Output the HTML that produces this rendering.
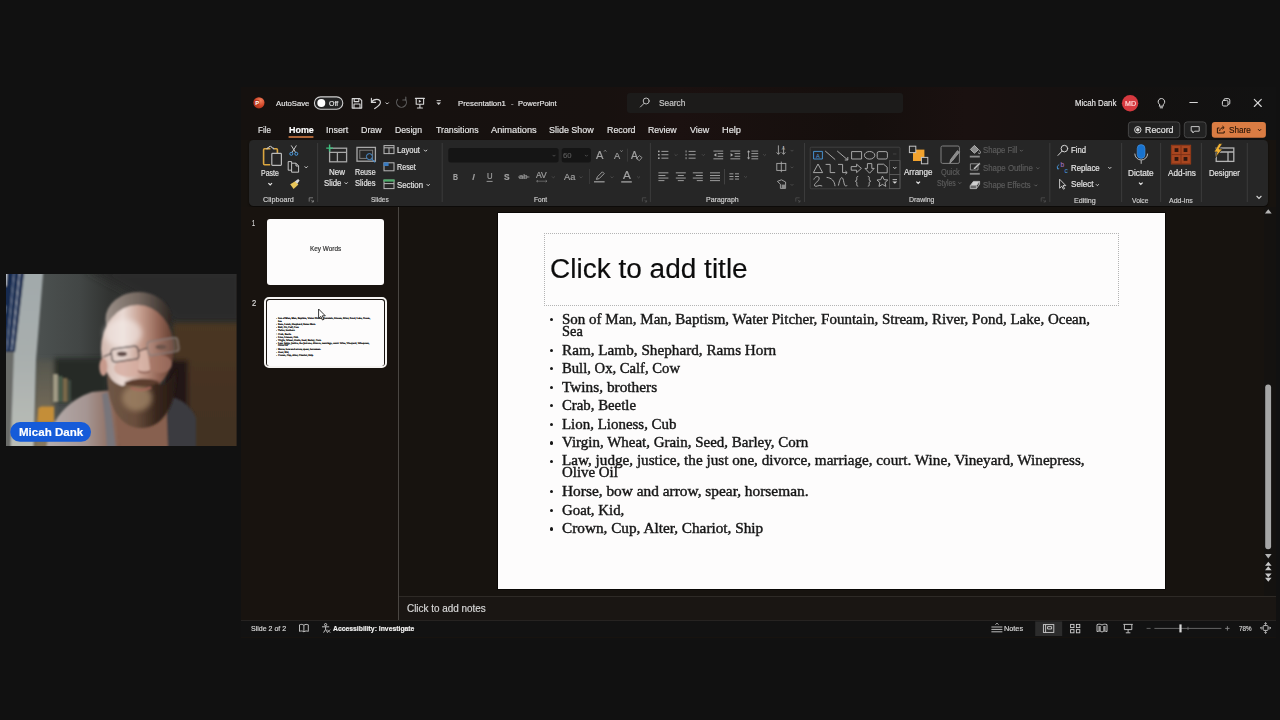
<!DOCTYPE html>
<html lang="en"><head><meta charset="utf-8"><title>Presentation1 - PowerPoint</title>
<style>
html,body{margin:0;padding:0;width:1280px;height:720px;overflow:hidden;background:#111111}
body{position:relative;font-family:"Liberation Sans",sans-serif}
.t{position:absolute;white-space:pre;line-height:1;transform-origin:0 0;font-family:"Liberation Sans",sans-serif;-webkit-text-stroke:0.18px currentColor}
.sf{font-family:"Liberation Serif",serif}
.it{font-style:italic}
.sf{-webkit-text-stroke:0.4px #161616}
.mini{position:absolute;left:267.1px;top:299.5px}
.abs{position:absolute}
.cam{position:absolute;left:6px;top:274px}
.win{position:absolute;left:240.5px;top:86.5px;width:1035.5px;height:551px;background:#17130f}
.titlebar{position:absolute;left:240.5px;top:86.5px;width:1035.5px;height:53.5px;background:linear-gradient(90deg,#15110f 0%,#17110f 35%,#1b1110 42%,#150f0d 60%,#1a1110 70%,#131110 85%,#121212 100%)}
.search{position:absolute;left:627px;top:93px;width:275.5px;height:20px;background:#1c1b1a;border-radius:3px}
.ribbon{position:absolute;left:249px;top:140px;width:1019.4px;height:65.6px;background:#262626;border-radius:4.5px;box-shadow:0 1px 2px rgba(0,0,0,.6)}
.thumbs{position:absolute;left:240.5px;top:207px;width:158px;height:414px;background:#18130f}
.vdiv{position:absolute;left:398.3px;top:207px;width:1px;height:414px;background:#4a4642}
.editor{position:absolute;left:399.3px;top:207px;width:864.7px;height:390px;background:#17130f}
.vscroll{position:absolute;left:1264px;top:207px;width:12px;height:390px;background:#141210}
.notes{position:absolute;left:399.3px;top:596.4px;width:876.7px;height:24.6px;background:#1a1613;border-top:1px solid #2e2a26;box-sizing:border-box}
.status{position:absolute;left:240.5px;top:620.2px;width:1035.5px;height:17.3px;background:#121212;border-top:0.8px solid #262321;box-sizing:border-box}
.slide{position:absolute;left:498.3px;top:213.1px;width:666.9px;height:375.6px;background:#fdfcfc;box-shadow:0 0 0 0.6px #000}
.ph{position:absolute;left:544.2px;top:233.2px;width:574.8px;height:72.5px;border:0.8px dotted #b4b4b4;box-sizing:border-box}
.bu{position:absolute;left:550.1px;width:3.3px;height:3.3px;border-radius:50%;background:#161616}
.th{position:absolute;background:#fdfcfc;border-radius:3px}
.ov{position:absolute;left:0;top:0;pointer-events:none}
</style></head><body>

<svg class="cam" width="231" height="172" viewBox="6 274 231 172">
<defs>
<filter id="b1" x="-20%" y="-20%" width="140%" height="140%"><feGaussianBlur stdDeviation="1.1"/></filter>
<filter id="b2" x="-20%" y="-20%" width="140%" height="140%"><feGaussianBlur stdDeviation="2.6"/></filter>
<filter id="b3" x="-30%" y="-30%" width="160%" height="160%"><feGaussianBlur stdDeviation="4.5"/></filter>
<linearGradient id="wall" x1="0" x2="1"><stop offset="0.15" stop-color="#4b504f"/><stop offset="0.32" stop-color="#424645"/><stop offset="0.45" stop-color="#313331"/><stop offset="1" stop-color="#2a2b28"/></linearGradient>
<linearGradient id="panel" x1="0" x2="0" y1="0" y2="1"><stop offset="0" stop-color="#a1a9ab"/><stop offset="0.5" stop-color="#a9afae"/><stop offset="1" stop-color="#bcbfb8"/></linearGradient>
<linearGradient id="door" x1="0" x2="0" y1="0" y2="1"><stop offset="0" stop-color="#4b3723"/><stop offset="0.6" stop-color="#443120"/><stop offset="1" stop-color="#423025"/></linearGradient>
<linearGradient id="skin" x1="0" x2="1"><stop offset="0" stop-color="#d2b8ae"/><stop offset="0.3" stop-color="#e9dad4"/><stop offset="0.55" stop-color="#c49c8d"/><stop offset="0.8" stop-color="#906252"/><stop offset="1" stop-color="#5c3a2e"/></linearGradient>
<linearGradient id="hair" x1="0" x2="1"><stop offset="0" stop-color="#9a8f88"/><stop offset="0.5" stop-color="#756860"/><stop offset="1" stop-color="#2e2622"/></linearGradient>
<linearGradient id="beard" x1="0" x2="1"><stop offset="0" stop-color="#6e5646"/><stop offset="0.4" stop-color="#6a4e3c"/><stop offset="0.7" stop-color="#3a281e"/><stop offset="1" stop-color="#241811"/></linearGradient>
<linearGradient id="shl" x1="0" x2="1"><stop offset="0" stop-color="#b6aead"/><stop offset="0.55" stop-color="#a59592"/><stop offset="1" stop-color="#86604f"/></linearGradient>
<linearGradient id="wl" x1="0" x2="0" y1="0" y2="1"><stop offset="0" stop-color="#55564e"/><stop offset="1" stop-color="#8b7a5f"/></linearGradient>
</defs>
<rect x="6" y="274" width="231" height="172" fill="url(#wall)"/>
<g filter="url(#b3)">
<path d="M84,268 h160 v56 h-70 c-16,-18 -50,-34 -90,-56z" fill="#2a2c29"/>
</g>
<g filter="url(#b2)">
<rect x="173" y="323" width="70" height="130" fill="url(#door)"/>
<rect x="166" y="360" width="22" height="50" fill="#241912"/>
<rect x="54" y="358" width="54" height="44" fill="#282927"/>
<path d="M36,360 h18 v92 h-21z" fill="url(#wl)"/>
</g>
<g filter="url(#b1)">
<path d="M24,270 h19.4 l-7.4,90 l-2.4,90 h-24.6 l2.4,-90 l3,-8z" fill="url(#panel)"/>
<path d="M2,270 h22.4 l-9.4,82 h-13z" fill="#16294f"/>
<path d="M2,270 h5 l-0.8,16 h-4.2z" fill="#eef3f6"/><path d="M2,306 h3.8 l-0.5,7 h-3.3z" fill="#8fa4c0"/>
<path d="M14,270 h0.8 l-7.6,80 h-0.8z" fill="#b8c6d8" opacity="0.8"/><path d="M19.4,270 h0.9 l-8.2,80 h-0.9z" fill="#dfe6ee" opacity="0.85"/>
<path d="M2,352 h12 l-3.4,98 h-8.6z" fill="#6b6c69"/>
<rect x="53" y="374" width="5" height="28" fill="#a09a84"/><rect x="58.5" y="376" width="4" height="26" fill="#4c5f4c"/><rect x="63" y="378" width="4.5" height="24" fill="#7a6a4c"/><rect x="68" y="380" width="3" height="22" fill="#3c4a40"/>
<path d="M38.4,408 l3,-1.6 h12.6 v16 h-16.6z" fill="#c48e38"/>
<path d="M46,450 c3,-30 22,-50 46,-58 l22,-2 l6,60z" fill="url(#shl)"/>
<path d="M108,392 c4,20 6,40 8,58 h-9 c-1,-20 -3,-40 -5,-56z" fill="#78747a"/>
<path d="M114,404 l6,46 h52 l4,-46z" fill="#87604f"/>
<path d="M166,396 c14,2 24,8 30,22 v32 h-28z" fill="#3a3a3f"/>
</g>
<g filter="url(#b1)">
<ellipse cx="138.5" cy="319" rx="33" ry="27" fill="url(#hair)"/>
<ellipse cx="137.5" cy="349" rx="36.5" ry="44" fill="url(#skin)"/>
<ellipse cx="123" cy="333" rx="19" ry="14" fill="#f4ebe8" opacity="0.6" filter="url(#b2)"/>
<ellipse cx="103.4" cy="367" rx="4" ry="9" fill="#c79a8c"/>
<ellipse cx="128" cy="368" rx="14" ry="9" fill="#d6ada0" opacity="0.8"/>
<ellipse cx="160" cy="364" rx="12" ry="9" fill="#a87868" opacity="0.7"/>
<path d="M107,372 c0,36 14,56 34,56 c22,0 36,-22 36,-60 c-6,12 -10,16 -16,17 c-6,-5 -30,-5 -38,1 c-8,-2 -12,-6 -16,-14z" fill="url(#beard)"/>
<ellipse cx="137" cy="398" rx="15" ry="13" fill="#a08466" opacity="0.8" filter="url(#b2)"/>
<path d="M124,383 c8,-5 26,-6 36,-1 c-8,5 -28,6 -36,1z" fill="#5c3c2e"/>
<path d="M131,388 c6,2.4 14,2.4 20,-0.6" stroke="#a8685c" stroke-width="2" fill="none"/>
<path d="M141,350 c-2,8 -3,14 -2,20 c3,3 8,3 11,0 c0,-6 -2,-12 -3,-20z" fill="#dcb9ad" opacity="0.8"/>
<path d="M138,371 c3,2 9,2 12,0" stroke="#7a4a3e" stroke-width="1.4" fill="none"/>
<ellipse cx="122" cy="354" rx="5" ry="2.4" fill="#5e4a44"/><ellipse cx="161" cy="347" rx="5.5" ry="2.4" fill="#5a4038"/>
<path d="M103,357 l8,-3.4 M138.6,351 l9,-3" stroke="#3e3636" stroke-width="1.2" fill="none"/>
<rect x="111.5" y="347.5" width="27" height="13" rx="3.5" transform="rotate(-8 125 354)" fill="none" stroke="#453d3d" stroke-width="1.2"/>
<rect x="147.5" y="339.5" width="31" height="14" rx="3.5" transform="rotate(-9 163 346)" fill="#c8b4ac" fill-opacity="0.18" stroke="#8a7f7c" stroke-width="1.2"/>
</g>
<rect x="236" y="274" width="1" height="172" fill="#1a1614" opacity="0.5"/>
<rect x="10.2" y="422.1" width="80.8" height="19.7" rx="9.85" fill="#155bd9"/>
</svg>

<div class="win"></div>
<div class="titlebar"></div>
<div class="search"></div>
<div class="ribbon"></div>
<div class="thumbs"></div><div class="vdiv"></div>
<div class="editor"></div><div class="vscroll"></div>
<div class="notes"></div>
<div class="status"></div>
<div class="th" style="left:266.9px;top:219.3px;width:116.8px;height:66.1px"></div>
<div class="abs" style="left:264.2px;top:296.6px;width:122.4px;height:71.8px;border:2.3px solid #f6f4f2;border-radius:5px;box-sizing:border-box"></div>
<div class="th" style="left:267.1px;top:299.5px;width:116.6px;height:66px;border-radius:2.5px"></div>
<div class="slide"></div><div class="ph"></div>
<i class="bu" style="top:317.9px"></i><i class="bu" style="top:348.8px"></i><i class="bu" style="top:367.2px"></i><i class="bu" style="top:385.8px"></i><i class="bu" style="top:404.2px"></i><i class="bu" style="top:422.7px"></i><i class="bu" style="top:441.3px"></i><i class="bu" style="top:459.5px"></i><i class="bu" style="top:490.1px"></i><i class="bu" style="top:508.9px"></i><i class="bu" style="top:527.4px"></i>
<svg class="ov" width="1280" height="720" viewBox="0 0 1280 720">

<defs><radialGradient id="pp" cx="0.65" cy="0.3" r="0.8"><stop offset="0" stop-color="#f0805c"/><stop offset="0.6" stop-color="#cf4426"/><stop offset="1" stop-color="#9e2d18"/></radialGradient></defs>
<circle cx="258.9" cy="102.8" r="5.6" fill="url(#pp)"/>
<rect x="254.2" y="100" width="5.2" height="5.6" rx="0.8" fill="#b8371f"/>
<text x="255.2" y="105" font-size="5.8" font-weight="bold" fill="#ffffff" font-family="Liberation Sans, sans-serif">P</text>
<rect x="314.4" y="96.9" width="28.4" height="12.4" rx="6.2" fill="#232323" stroke="#cfcfcf" stroke-width="1.1"/>
<circle cx="321.3" cy="103.1" r="4" fill="#ffffff"/>
<g stroke="#d6d6d6" stroke-width="1.1" fill="none" stroke-linejoin="round" stroke-linecap="round">
<path d="M352.2,98.6 h7.6 l1.9,1.9 v7.6 h-9.5z"/><path d="M354.2,98.8 v2.8 h4.6 v-2.8"/><path d="M354,108 v-4 h6 v4"/>
<path d="M371.4,98.2 v4.2 h4.2"/><path d="M371.6,102.2 C373.5,98.6 380.4,98.2 380.4,102.6 C380.4,105.2 377.5,106.8 374.6,108.6"/>
<path d="M397.6,99.4 A4.9,4.9 0 1 0 405.4,99.4" stroke="#5e5e5e"/><path d="M405.8,97 v3 h-3" stroke="#5e5e5e"/>
<path d="M415.4,98.4 h9 M416.2,98.6 v5.6 h7.4 v-5.6 M419.9,104.4 v3.4 M417.4,108 h5"/>
</g>
<path d="M418.8,99.8 l2.6,1.5 l-2.6,1.5z" fill="#d6d6d6"/>
<path d="M385.7,102.5 L387.2,104.0 L388.7,102.5" stroke="#d6d6d6" stroke-width="1" fill="none"/>
<path d="M436.6,100.6 h4.2" stroke="#d6d6d6" stroke-width="0.9"/><path d="M436.4,102.6 h4.6 l-2.3,2.4z" fill="#d6d6d6"/>
<g stroke="#bdbdbd" stroke-width="1" fill="none" stroke-linecap="round"><circle cx="646.2" cy="101" r="3"/><path d="M644,103.4 l-3.6,3.6"/></g>
<circle cx="1130.1" cy="103.2" r="8.2" fill="#d6393f"/>
<g stroke="#d6d6d6" stroke-width="1" fill="none" stroke-linecap="round">
<path d="M1159.6,104.6 A3.3,3.3 0 1 1 1163.2,104.6 v1.6 h-3.6z"/><path d="M1160.2,107.8 h2.4"/>
<path d="M1189.8,102.5 h7.6"/>
<rect x="1222.4" y="100.4" width="5.6" height="5.6" rx="1.4"/><path d="M1224,100.2 v-0.4 a1.2,1.2 0 0 1 1.2,-1.2 h3 a1.6,1.6 0 0 1 1.6,1.6 v3 a1.2,1.2 0 0 1 -1.2,1.2 h-0.4"/>
<path d="M1254.3,99.3 l7,7.2 M1261.3,99.3 l-7,7.2" stroke-width="1.1"/>
</g>


<rect x="288.4" y="136.2" width="25.2" height="1.5" rx="0.7" fill="#de8046"/>
<rect x="1128.4" y="121.9" width="51.4" height="15.8" rx="3" fill="#222" stroke="#4c4c4c" stroke-width="0.9"/>
<circle cx="1137.8" cy="129.8" r="3.2" fill="none" stroke="#d6d6d6" stroke-width="1"/><circle cx="1137.8" cy="129.8" r="1.7" fill="#d6d6d6"/>
<rect x="1184.3" y="121.9" width="21.8" height="15.8" rx="3" fill="#222" stroke="#4c4c4c" stroke-width="0.9"/>
<path d="M1191.2,126.6 h8 v4.6 h-4.6 l-1.8,1.8 v-1.8 h-1.6z" fill="none" stroke="#d6d6d6" stroke-width="0.9" stroke-linejoin="round"/>
<rect x="1211.8" y="121.9" width="54.1" height="15.8" rx="3" fill="#da7c43"/>
<g stroke="#2a1608" stroke-width="1" fill="none" stroke-linejoin="round"><path d="M1219.4,128 h-2 v5 h6.8 v-2"/><path d="M1219.6,131 c0.4,-2.4 2,-3.4 4,-3.4 M1222.4,126 l1.8,1.6 l-1.8,1.6"/></g>
<path d="M1258.1,129.2 L1259.6,130.8 L1261.1,129.2" stroke="#2a1608" stroke-width="1" fill="none"/>


<rect x="317.20000000000005" y="143" width="0.9" height="59" fill="#3e3e3e"/><rect x="441.70000000000005" y="143" width="0.9" height="59" fill="#3e3e3e"/><rect x="649.9" y="143" width="0.9" height="59" fill="#3e3e3e"/><rect x="804.1" y="143" width="0.9" height="59" fill="#3e3e3e"/><rect x="1049.3999999999999" y="143" width="0.9" height="59" fill="#3e3e3e"/><rect x="1121.1999999999998" y="143" width="0.9" height="59" fill="#3e3e3e"/><rect x="1160.1999999999998" y="143" width="0.9" height="59" fill="#3e3e3e"/><rect x="1200.8999999999999" y="143" width="0.9" height="59" fill="#3e3e3e"/><rect x="1246.8" y="143" width="0.9" height="59" fill="#3e3e3e"/>
<!-- paste -->
<g fill="none" stroke-linejoin="round">
<path d="M270.4,148.8 h-5.8 a1,1 0 0 0 -1,1 v14 a1,1 0 0 0 1,1 h5.6" stroke="#dba63f" stroke-width="1.6"/>
<path d="M274,148.8 h2.4 a1,1 0 0 1 1,1 v3.4" stroke="#dba63f" stroke-width="1.6"/>
<path d="M267,149.4 v-1.4 h1.6 a1.7,1.7 0 0 1 3.4,0 h1.6 v1.4" stroke="#c9c9c9" stroke-width="1"/>
<rect x="271.8" y="153.4" width="9.6" height="12" rx="0.8" stroke="#b9b9b9" stroke-width="1.2" fill="#262626"/>
</g>
<path d="M268.4,183.1 L270.2,184.9 L272.0,183.1" stroke="#e8e8e8" stroke-width="1.2" fill="none"/>
<!-- cut -->
<g stroke="#d6d6d6" stroke-width="0.9" fill="none"><path d="M291.2,145.4 l4.6,7.4 M296.4,145.4 l-4.6,7.4"/></g>
<circle cx="291.3" cy="153.8" r="1.5" fill="none" stroke="#4a9be0" stroke-width="1"/><circle cx="296.3" cy="153.8" r="1.5" fill="none" stroke="#4a9be0" stroke-width="1"/>
<!-- copy -->
<g stroke="#d6d6d6" stroke-width="0.9" fill="none" stroke-linejoin="round"><path d="M291.6,163.2 v-1.6 h-3.4 v8.6 h3.2"/><path d="M291.6,163.2 h4.4 l2.6,2.6 v6.4 h-7z"/><path d="M296,163.4 v2.6 h2.4"/></g>
<path d="M304.7,166.4 L306.2,167.9 L307.7,166.4" stroke="#d6d6d6" stroke-width="1" fill="none"/>
<!-- format painter -->
<g><path d="M290.2,184.2 l5,-3 l3.2,3.2 l-4.8,4.6z" fill="#e8c65a"/><path d="M294.8,181.4 l3.4,-2.4 l1.4,1.4 l-2.2,3.4z" fill="#d8d8d8"/></g>
<path d="M309.2,201.6 v-3.8 h3.8 M311.2,199.8 l2.2,2.2 M313.4,200.2 v1.8 h-1.8" stroke="#9a9a9a" stroke-width="0.7" fill="none"/>
<!-- new slide -->
<g fill="none" stroke="#a9a9a9" stroke-width="1.3"><rect x="329.6" y="148.2" width="17" height="13.6"/><path d="M329.6,152.4 h17 M337.4,152.4 v9.4"/></g>
<path d="M329.6,144.6 v7 M326.2,148.1 h6.8" stroke="#3fbf7f" stroke-width="1.4"/>
<path d="M344.7,182.4 L346.2,183.9 L347.7,182.4" stroke="#d6d6d6" stroke-width="1" fill="none"/>
<!-- reuse slides -->
<g fill="none" stroke="#a9a9a9" stroke-width="1.3"><rect x="357" y="147.4" width="18.4" height="13.8"/><rect x="359.8" y="150.2" width="12.8" height="8.2" stroke="#7d7d7d" stroke-width="1"/></g>
<circle cx="369.4" cy="156.6" r="3" fill="#262626" stroke="#4a8fd0" stroke-width="1"/><path d="M371.6,158.8 l3.6,3.6" stroke="#4a8fd0" stroke-width="1.1"/>
<!-- layout / reset / section -->
<g fill="none" stroke="#b9b9b9" stroke-width="1"><rect x="384" y="145.6" width="10" height="8"/><path d="M384,147.8 h10 M389,147.8 v5.8"/></g>
<g fill="none" stroke="#b9b9b9" stroke-width="1"><rect x="384" y="162.8" width="10" height="8"/></g><path d="M383.6,162.4 h5 v3.6 h-5z" fill="#3a7bc0"/>
<g fill="none" stroke="#b9b9b9" stroke-width="1"><rect x="384" y="180.2" width="10" height="8.4"/></g><rect x="383.5" y="179.4" width="11" height="2.2" fill="#4fae6c"/><path d="M384,183.6 h10" stroke="#b9b9b9" stroke-width="1"/>
<path d="M424.1,149.8 L425.6,151.3 L427.1,149.8" stroke="#d6d6d6" stroke-width="1" fill="none"/><path d="M426.7,184.2 L428.2,185.8 L429.7,184.2" stroke="#d6d6d6" stroke-width="1" fill="none"/>
<!-- font boxes -->
<rect x="448.3" y="148" width="110.3" height="14.4" rx="2.5" fill="#151515"/>
<rect x="561.7" y="148" width="29.2" height="14.4" rx="2.5" fill="#151515"/>
<path d="M552.6,154.9 L554.0,156.3 L555.4,154.9" stroke="#4a4a4a" stroke-width="1" fill="none"/><path d="M585.0,154.9 L586.4,156.3 L587.8,154.9" stroke="#4a4a4a" stroke-width="1" fill="none"/>
<path d="M642.4,201.6 v-3.8 h3.8 M644.4,199.8 l2.2,2.2 M646.6,200.2 v1.8 h-1.8" stroke="#555" stroke-width="0.7" fill="none"/>
<rect x="627" y="148.6" width="0.8" height="13" fill="#3e3e3e"/><rect x="589.2" y="169" width="0.8" height="15" fill="#3e3e3e"/>
<path d="M552.0,176.5 L553.4,177.9 L554.8,176.5" stroke="#4a4a4a" stroke-width="1" fill="none"/><path d="M579.6,176.5 L581.0,177.9 L582.4,176.5" stroke="#4a4a4a" stroke-width="1" fill="none"/><path d="M610.6,176.5 L612.0,177.9 L613.4,176.5" stroke="#4a4a4a" stroke-width="1" fill="none"/><path d="M637.2,176.5 L638.6,177.9 L640.0,176.5" stroke="#4a4a4a" stroke-width="1" fill="none"/>
<path d="M518,177 h11.4" stroke="#9a9a9a" stroke-width="0.8"/>
<path d="M486.6,181.4 h6" stroke="#b0b0b0" stroke-width="0.8"/>
<path d="M536.6,181.2 h10.4 M536.6,181.2 l1.4,-1 M536.6,181.2 l1.4,1 M547,181.2 l-1.4,-1 M547,181.2 l-1.4,1" stroke="#8a8a8a" stroke-width="0.6" fill="none"/>
<path d="M594,181.8 h10.6" stroke="#9a9a9a" stroke-width="1.3"/><path d="M596.4,179.4 l1,-2.6 l5,-5 l1.8,1.8 l-5,5z" fill="none" stroke="#a8a8a8" stroke-width="0.9"/>
<path d="M621.2,181.9 h10.6" stroke="#a4a4a4" stroke-width="1.3"/>
<path d="M636.4,158.6 l3,-3 l2.6,2 l-2.6,3z" fill="none" stroke="#a9a9a9" stroke-width="0.8"/>
<path d="M604,151.6 l1.2,-1.4 l1.2,1.4 M620.4,150.4 l1.1,1.3 l1.1,-1.3" stroke="#a2a2a2" stroke-width="0.7" fill="none"/>
<!-- paragraph row1 -->
<g fill="#a9a9a9">
<rect x="658" y="150.6" width="1.6" height="1.6"/><rect x="658" y="154" width="1.6" height="1.6"/><rect x="658" y="157.4" width="1.6" height="1.6"/>
<rect x="661.4" y="150.9" width="7" height="0.9"/><rect x="661.4" y="154.3" width="7" height="0.9"/><rect x="661.4" y="157.7" width="7" height="0.9"/>
<rect x="685.6" y="150.4" width="0.9" height="2"/><rect x="685.6" y="153.8" width="0.9" height="2"/><rect x="685.6" y="157.2" width="0.9" height="2"/>
<rect x="688.6" y="150.9" width="7" height="0.9"/><rect x="688.6" y="154.3" width="7" height="0.9"/><rect x="688.6" y="157.7" width="7" height="0.9"/>
<rect x="713.4" y="150.6" width="9.8" height="0.9"/><rect x="717.6" y="153.2" width="5.6" height="0.9"/><rect x="717.6" y="155.8" width="5.6" height="0.9"/><rect x="713.4" y="158.4" width="9.8" height="0.9"/>
<path d="M716.4,153 l-2.6,1.9 l2.6,1.9z"/>
<rect x="730.4" y="150.6" width="9.8" height="0.9"/><rect x="734.6" y="153.2" width="5.6" height="0.9"/><rect x="734.6" y="155.8" width="5.6" height="0.9"/><rect x="730.4" y="158.4" width="9.8" height="0.9"/>
<path d="M730.6,153 l2.6,1.9 l-2.6,1.9z"/>
<rect x="751.4" y="150.6" width="6.8" height="0.9"/><rect x="751.4" y="153.2" width="6.8" height="0.9"/><rect x="751.4" y="155.8" width="6.8" height="0.9"/><rect x="751.4" y="158.4" width="6.8" height="0.9"/>
<path d="M748.6,150.2 l1.6,2 h-3.2z M748.6,159.6 l1.6,-2 h-3.2z"/><rect x="748.2" y="151.6" width="0.8" height="6.6"/>
</g>
<path d="M674.6,154.3 L676.0,155.7 L677.4,154.3" stroke="#4a4a4a" stroke-width="1" fill="none"/><path d="M702.0,154.3 L703.4,155.7 L704.8,154.3" stroke="#4a4a4a" stroke-width="1" fill="none"/><path d="M763.2,154.3 L764.6,155.7 L766.0,154.3" stroke="#4a4a4a" stroke-width="1" fill="none"/>
<rect x="658.4" y="172.4" width="10" height="0.9" fill="#a9a9a9"/><rect x="658.4" y="175.0" width="7" height="0.9" fill="#a9a9a9"/><rect x="658.4" y="177.6" width="10" height="0.9" fill="#a9a9a9"/><rect x="658.4" y="180.2" width="6" height="0.9" fill="#a9a9a9"/><rect x="675.8" y="172.4" width="10" height="0.9" fill="#a9a9a9"/><rect x="677.8" y="175.0" width="6" height="0.9" fill="#a9a9a9"/><rect x="675.8" y="177.6" width="10" height="0.9" fill="#a9a9a9"/><rect x="677.8" y="180.2" width="6" height="0.9" fill="#a9a9a9"/><rect x="692.8" y="172.4" width="10" height="0.9" fill="#a9a9a9"/><rect x="695.8" y="175.0" width="7" height="0.9" fill="#a9a9a9"/><rect x="692.8" y="177.6" width="10" height="0.9" fill="#a9a9a9"/><rect x="696.8" y="180.2" width="6" height="0.9" fill="#a9a9a9"/><rect x="710.0" y="172.4" width="10" height="0.9" fill="#a9a9a9"/><rect x="710.0" y="175.0" width="10" height="0.9" fill="#a9a9a9"/><rect x="710.0" y="177.6" width="10" height="0.9" fill="#a9a9a9"/><rect x="710.0" y="180.2" width="10" height="0.9" fill="#a9a9a9"/>
<rect x="724" y="169" width="0.8" height="15.4" fill="#4a4a4a"/>
<g fill="#a9a9a9"><rect x="729.4" y="173.4" width="4" height="0.9"/><rect x="729.4" y="176" width="4" height="0.9"/><rect x="729.4" y="178.6" width="4" height="0.9"/><rect x="735" y="173.4" width="4" height="0.9"/><rect x="735" y="176" width="4" height="0.9"/><rect x="735" y="178.6" width="4" height="0.9"/></g>
<path d="M744.2,176.3 L745.6,177.7 L747.0,176.3" stroke="#4a4a4a" stroke-width="1" fill="none"/>
<!-- paragraph right column -->
<g stroke="#a9a9a9" stroke-width="0.9" fill="none"><path d="M778.4,145.4 v8.6 M776.6,152.4 l1.8,2 l1.8,-2 M783.6,146 v8 M781.8,152.4 l1.8,2 l1.8,-2"/>
<rect x="776.8" y="163.4" width="9" height="7"/><path d="M781.3,161.6 v10.6"/>
<path d="M777.4,181.4 l4,-1.6 l4.2,2.2 v6.4 h-5.2 v-4.2z"/></g>
<rect x="781.6" y="184.6" width="4" height="3.6" fill="#8a8a8a"/>
<text x="781.8" y="149.6" font-size="4.8" fill="#a9a9a9" font-family="Liberation Sans, sans-serif">A</text>
<path d="M790.6,149.9 L792.0,151.3 L793.4,149.9" stroke="#4a4a4a" stroke-width="1" fill="none"/><path d="M790.6,166.7 L792.0,168.1 L793.4,166.7" stroke="#4a4a4a" stroke-width="1" fill="none"/><path d="M790.6,184.1 L792.0,185.5 L793.4,184.1" stroke="#4a4a4a" stroke-width="1" fill="none"/>
<path d="M795.8,201.6 v-3.8 h3.8 M797.8,199.8 l2.2,2.2 M800,200.2 v1.8 h-1.8" stroke="#555" stroke-width="0.7" fill="none"/>
<!-- shapes gallery -->
<rect x="810.2" y="147.2" width="89.8" height="41.6" rx="1" fill="none" stroke="#454545" stroke-width="0.8"/>
<rect x="889.6" y="160.6" width="10.4" height="14" fill="none" stroke="#5a5a5a" stroke-width="0.8"/><rect x="889.6" y="174.6" width="10.4" height="14" fill="none" stroke="#5a5a5a" stroke-width="0.8"/>
<path d="M893.3,167.1 L894.8,168.6 L896.3,167.1" stroke="#d6d6d6" stroke-width="1" fill="none"/><path d="M892.6,179.6 h4.4" stroke="#d6d6d6" stroke-width="0.8"/><path d="M892.4,181.4 h4.8 l-2.4,2.4z" fill="#d6d6d6"/>
<path d="M893,154 h3.4" stroke="#4a4a4a" stroke-width="0.8"/>
<g stroke="#b4b4b4" stroke-width="0.9" fill="none" stroke-linejoin="round">
<rect x="813.6" y="151.4" width="8.8" height="7.6" stroke="#4a9be0"/>
<path d="M825.2,151 l10,8.6"/><path d="M837.2,151 l10.4,8.8 M847.8,157 v3 h-3"/>
<rect x="851.6" y="151.6" width="10" height="7.4"/><ellipse cx="869.6" cy="155.3" rx="5.2" ry="3.8"/><rect x="877.2" y="151.6" width="10.2" height="7.4" rx="1.6"/>
<path d="M818,164 l4.6,8.6 h-9.2z"/><path d="M825.6,164.4 h4.6 v8.2 h5"/><path d="M838,164.4 h4.6 v8.2 h4.2 M845.4,171 l1.8,1.6 l-1.8,1.6"/>
<path d="M851.2,166.6 h5.4 v-2.4 l4.8,4.2 l-4.8,4.2 v-2.4 h-5.4z"/><path d="M867.4,163.6 h4.4 v4.8 h2.4 l-4.6,4.8 l-4.6,-4.8 h2.4z"/>
<path d="M877.6,164.2 h6 l3.6,3 v5.6 h-9.6z"/>
<path d="M813.8,179.6 c1.6,-4.4 6.4,-3.6 5.2,-0.4 c-1.2,3 -5.6,4.6 -4.4,6.6 c1.2,1.8 4.4,-1.6 7.6,0.2"/><path d="M826.6,177.4 c5,0.4 8,3.6 8.4,8.8"/><path d="M838.4,185.6 c2,-10 4.4,-10 5.4,-3.4 c0.8,4.6 2.4,4.4 3.4,3"/>
<path d="M858.2,176.4 c-2,0 -1.4,1.6 -1.4,2.6 c0,1.4 -0.6,2.2 -1.6,2.2 c1,0 1.6,0.8 1.6,2.2 c0,1 -0.6,2.8 1.4,2.8"/>
<path d="M867.8,176.4 c2,0 1.4,1.6 1.4,2.6 c0,1.4 0.6,2.2 1.6,2.2 c-1,0 -1.6,0.8 -1.6,2.2 c0,1 0.6,2.8 -1.4,2.8"/>
<path d="M882.4,176 l1.6,3.6 l3.8,0.4 l-2.8,2.6 l0.8,3.8 l-3.4,-2 l-3.4,2 l0.8,-3.8 l-2.8,-2.6 l3.8,-0.4z"/>
</g>
<text x="816.1" y="157.6" font-size="5.6" fill="#4a9be0" font-family="Liberation Sans, sans-serif">A</text>
<!-- arrange -->
<rect x="913" y="149.6" width="11.4" height="11.4" fill="#f2a32e"/>
<rect x="909.4" y="146.2" width="6.4" height="6.4" fill="#262626" stroke="#c4c4c4" stroke-width="1"/>
<rect x="921.4" y="157.4" width="6.4" height="6.4" fill="#262626" stroke="#c4c4c4" stroke-width="1"/>
<path d="M916.4,181.7 L918.2,183.5 L920.0,181.7" stroke="#e8e8e8" stroke-width="1.2" fill="none"/>
<!-- quick styles -->
<rect x="941" y="146" width="18.4" height="17.4" rx="1.5" fill="none" stroke="#808080" stroke-width="1"/>
<path d="M959.6,151.8 l-7.2,9 l-2.6,2.4 l0.8,-3.6 l7,-9.2" fill="#8a8a8a" stroke="#a0a0a0" stroke-width="0.8"/>
<path d="M958.4,182.3 L959.8,183.7 L961.2,182.3" stroke="#5e5e5e" stroke-width="1" fill="none"/>
<!-- shape fill / outline / effects -->
<g stroke="#b8b8b8" stroke-width="0.9" fill="none" stroke-linejoin="round"><path d="M974.4,145.4 l4.2,4.2 l-4.2,3.6 l-4,-3.8z" fill="#8c8c8c"/><path d="M979,149.8 c1,1.2 1.4,2 1.4,2.8 a1,1 0 0 1 -2,0"/><path d="M969.8,156.6 h10" stroke="#8a8a8a" stroke-width="1.8"/>
<rect x="970.4" y="163.8" width="7.6" height="6.2" stroke="#9a9a9a"/><path d="M973.6,168 l5.6,-5.4 l1.3,1.3 l-5.4,5.4 l-2,0.6z" fill="#c8c8c8" stroke="#262626" stroke-width="0.5"/><path d="M969.8,173.8 h10" stroke="#8a8a8a" stroke-width="1.8"/>
<path d="M970.2,185.8 l3.2,-4.4 h6.2 l-3.2,4.4z" fill="#d0d0d0"/><path d="M970.2,185.8 v2.8 h6.2 v-2.8 M976.4,188.6 l3.2,-4.4 v-2.8" fill="#6a6a6a"/></g>
<path d="M1020.0,149.9 L1021.4,151.3 L1022.8,149.9" stroke="#5e5e5e" stroke-width="1" fill="none"/><path d="M1036.4,167.5 L1037.8,168.9 L1039.2,167.5" stroke="#5e5e5e" stroke-width="1" fill="none"/><path d="M1034.4,184.7 L1035.8,186.1 L1037.2,184.7" stroke="#5e5e5e" stroke-width="1" fill="none"/>
<path d="M1041.2,201.6 v-3.8 h3.8 M1043.2,199.8 l2.2,2.2 M1045.4,200.2 v1.8 h-1.8" stroke="#555" stroke-width="0.7" fill="none"/>
<!-- editing -->
<g stroke="#d6d6d6" stroke-width="1" fill="none" stroke-linecap="round"><circle cx="1064.4" cy="148.6" r="3.3"/><path d="M1062,151.2 l-4,4.2"/></g>
<text x="1060.6" y="166.8" font-size="6.6" fill="#b27ad8" font-family="Liberation Sans, sans-serif">b</text>
<text x="1064.4" y="173.2" font-size="6.6" fill="#4a9be0" font-family="Liberation Sans, sans-serif">c</text>
<path d="M1059.2,164.6 a3,3 0 0 0 -1.6,4 M1057.2,167.6 l0.6,1.6 l1.4,-0.8" stroke="#4a9be0" stroke-width="0.8" fill="none"/>
<path d="M1059.6,179.2 v9 l2.2,-2 l1.6,3 l1.2,-0.6 l-1.6,-3 h2.8z" stroke="#d6d6d6" stroke-width="0.9" fill="none" stroke-linejoin="round"/>
<path d="M1108.3,167.1 L1109.8,168.6 L1111.3,167.1" stroke="#d6d6d6" stroke-width="1" fill="none"/><path d="M1096.0,184.3 L1097.4,185.7 L1098.8,184.3" stroke="#d6d6d6" stroke-width="1" fill="none"/>
<!-- dictate -->
<rect x="1137.2" y="144.6" width="7.8" height="13.8" rx="3.9" fill="#1873cf" stroke="#4b94dd" stroke-width="0.6"/>
<path d="M1134.8,153.6 a6.4,6.4 0 0 0 12.8,0 M1141.2,160.2 v3.6" stroke="#bdbdbd" stroke-width="1" fill="none"/>
<path d="M1139.0,182.7 L1140.8,184.5 L1142.6,182.7" stroke="#e8e8e8" stroke-width="1.2" fill="none"/>
<!-- add-ins -->
<rect x="1170.9" y="144.8" width="20.2" height="19.6" fill="#a84620"/>
<path d="M1170.9,154.6 h20.2 M1181,144.8 v19.6" stroke="#7a2f14" stroke-width="0.9"/>
<rect x="1171.6" y="145.5" width="18.8" height="18.2" fill="none" stroke="#8a3718" stroke-width="0.9"/>
<g fill="#32170e"><rect x="1174.6" y="148.2" width="3.8" height="3.8"/><rect x="1183.6" y="148.2" width="3.8" height="3.8"/><rect x="1174.6" y="157" width="3.8" height="3.8"/><rect x="1183.6" y="157" width="3.8" height="3.8"/></g>
<!-- designer -->
<g stroke="#b4b4b4" stroke-width="1.3" fill="none"><rect x="1216.2" y="148" width="17.6" height="13.4"/><path d="M1216.2,152 h17.6 M1228,152 v9.4"/></g>
<path d="M1219,143.6 l-5,8.4 h3.2 l-2.2,6 l7.4,-9 h-3.4 l3.4,-5.4z" fill="#f2b232" stroke="#262626" stroke-width="0.7"/>
<path d="M1256.6,196.0 L1259.0,198.4 L1261.4,196.0" stroke="#d6d6d6" stroke-width="1.1" fill="none"/>


<g stroke="#d0d0d0" stroke-width="0.9" fill="none" stroke-linejoin="round">
<path d="M303.9,625.2 c-1.4,-1 -3,-1 -4.4,-0.4 v6.6 c1.4,-0.6 3,-0.6 4.4,0.4 c1.4,-1 3,-1 4.4,-0.4 v-6.6 c-1.4,-0.6 -3,-0.6 -4.4,0.4z M303.9,625.2 v6.6"/>
<circle cx="325.6" cy="624.6" r="1.1"/><path d="M322,626.8 h7.2 M325.6,626.8 v2.6 l-2,3.2 M325.6,629.4 l2,3.2"/><path d="M327.2,629.6 l3,3 M330.2,629.6 l-3,3" stroke-width="0.8"/>
<path d="M991.4,627 h11 M991.4,629.4 h11 M991.4,631.8 h11"/><path d="M995.4,624.6 l1.6,-1.4 l1.6,1.4" stroke-width="0.8"/>
</g>
<rect x="1035.2" y="621.4" width="27" height="14.6" fill="#2c2c2c"/>
<g stroke="#d0d0d0" stroke-width="0.9" fill="none">
<rect x="1043.4" y="624.6" width="10.4" height="7.8"/><path d="M1045.6,624.6 v7.8 M1047.6,626.6 h4 v2.4 h-4z"/>
<rect x="1070.6" y="624.4" width="3.4" height="3.2"/><rect x="1076.4" y="624.4" width="3.4" height="3.2"/><rect x="1070.6" y="629.6" width="3.4" height="3.2"/><rect x="1076.4" y="629.6" width="3.4" height="3.2"/>
<path d="M1102,625 c-1.6,-1 -3.4,-1 -5,-0.4 v7 c1.6,-0.6 3.4,-0.6 5,0.4 c1.6,-1 3.4,-1 5,-0.4 v-7 c-1.6,-0.6 -3.4,-0.6 -5,0.4z"/>
<path d="M1123.4,624.4 h9.4 M1124.4,624.6 v5 h7.4 v-5 M1128.1,629.8 v2.8 M1125.8,632.8 h4.6"/>
</g>
<path d="M1098.4,626 h2.4 v5 h-2.4z M1103.2,626 h2.4 v5 h-2.4z" fill="#9a9a9a"/>
<path d="M1146.6,628.4 h4" stroke="#6a6a6a" stroke-width="0.9"/><path d="M1154.4,628.4 h67" stroke="#7a7a7a" stroke-width="0.8"/>
<rect x="1179.4" y="624.4" width="2.2" height="8" fill="#d8d8d8"/><rect x="1187.6" y="626.8" width="0.8" height="3.2" fill="#7a7a7a"/>
<path d="M1225.2,628.4 h4.4 M1227.4,626.2 v4.4" stroke="#8a8a8a" stroke-width="0.9"/>
<g stroke="#d0d0d0" stroke-width="0.9" fill="none"><rect x="1263.2" y="625.6" width="4.8" height="4.8" rx="0.8"/><path d="M1264.4,623.8 l1.2,-1.3 l1.2,1.3 M1264.4,632.2 l1.2,1.3 l1.2,-1.3 M1261.6,626.8 l-1.2,1.2 l1.2,1.2 M1269.6,626.8 l1.2,1.2 l-1.2,1.2" stroke-width="0.8"/><path d="M1265.6,622.8 v2.4 M1265.6,630.8 v2.4 M1260.6,628 h2.2 M1268.4,628 h2.2" stroke-width="0.8"/></g>


<rect x="1265.2" y="384.6" width="5.9" height="164.6" rx="2.9" fill="#a6a6a6"/>
<path d="M1268.3,209.2 l3.4,4.4 h-6.8z" fill="#b4b4b4"/>
<path d="M1268.3,558.4 l3.3,-4.4 h-6.6z" fill="#b4b4b4"/>
<path d="M1268.3,561.8 l3.3,4 h-6.6z M1268.3,566.2 l3.3,4 h-6.6z" fill="#c8c8c8"/>
<path d="M1268.3,581.8 l3.3,-4 h-6.6z M1268.3,577.6 l3.3,-4 h-6.6z" fill="#c8c8c8"/>

</svg>
<span class="t" style="left:276.1px;top:99.85px;font-size:7.8px;color:#e4e4e4;transform:scaleX(0.9878)">AutoSave</span>
<span class="t" style="left:329.2px;top:100.00px;font-size:7.5px;color:#e4e4e4;transform:scaleX(0.9215)">Off</span>
<span class="t" style="left:457.7px;top:99.85px;font-size:7.8px;color:#e4e4e4;transform:scaleX(0.9932)">Presentation1</span>
<span class="t" style="left:511.0px;top:99.85px;font-size:7.8px;color:#aaa;transform:scaleX(0.9581)">-</span>
<span class="t" style="left:518.0px;top:99.85px;font-size:7.8px;color:#e4e4e4;transform:scaleX(0.9680)">PowerPoint</span>
<span class="t" style="left:658.7px;top:99.00px;font-size:8.5px;color:#c8c8c8;transform:scaleX(0.9763)">Search</span>
<span class="t" style="left:1074.6px;top:99.10px;font-size:8.3px;color:#e4e4e4;transform:scaleX(0.9427)">Micah Dank</span>
<span class="t" style="left:1124.6px;top:100.50px;font-size:6.5px;color:#ffd9d9;transform:scaleX(1.0881)">MD</span>
<span class="t" style="left:257.8px;top:125.00px;font-size:9.5px;color:#e4e4e4;transform:scaleX(0.8490)">File</span>
<span class="t" style="left:288.6px;top:125.00px;font-size:9.5px;color:#ffffff;transform:scaleX(0.9392);font-weight:bold">Home</span>
<span class="t" style="left:326.2px;top:125.00px;font-size:9.5px;color:#e4e4e4;transform:scaleX(0.9383)">Insert</span>
<span class="t" style="left:361.3px;top:125.00px;font-size:9.5px;color:#e4e4e4;transform:scaleX(0.9336)">Draw</span>
<span class="t" style="left:395.3px;top:125.00px;font-size:9.5px;color:#e4e4e4;transform:scaleX(0.9128)">Design</span>
<span class="t" style="left:435.9px;top:125.00px;font-size:9.5px;color:#e4e4e4;transform:scaleX(0.9239)">Transitions</span>
<span class="t" style="left:491.3px;top:125.00px;font-size:9.5px;color:#e4e4e4;transform:scaleX(0.9723)">Animations</span>
<span class="t" style="left:549.3px;top:125.00px;font-size:9.5px;color:#e4e4e4;transform:scaleX(0.9404)">Slide Show</span>
<span class="t" style="left:606.5px;top:125.00px;font-size:9.5px;color:#e4e4e4;transform:scaleX(0.9306)">Record</span>
<span class="t" style="left:648.3px;top:125.00px;font-size:9.5px;color:#e4e4e4;transform:scaleX(0.9212)">Review</span>
<span class="t" style="left:690.2px;top:125.00px;font-size:9.5px;color:#e4e4e4;transform:scaleX(0.9353)">View</span>
<span class="t" style="left:722.3px;top:125.00px;font-size:9.5px;color:#e4e4e4;transform:scaleX(0.9720)">Help</span>
<span class="t" style="left:1144.5px;top:125.60px;font-size:9.3px;color:#e4e4e4;transform:scaleX(0.9505)">Record</span>
<span class="t" style="left:1228.5px;top:125.60px;font-size:9.3px;color:#2a1608;transform:scaleX(0.8786)">Share</span>
<span class="t" style="left:261.3px;top:169.65px;font-size:8.2px;color:#e4e4e4;transform:scaleX(0.8501)">Paste</span>
<span class="t" style="left:262.9px;top:195.95px;font-size:7.6px;color:#d0d0d0;transform:scaleX(0.9472)">Clipboard</span>
<span class="t" style="left:328.8px;top:168.65px;font-size:8.2px;color:#e4e4e4;transform:scaleX(0.9762)">New</span>
<span class="t" style="left:323.8px;top:179.65px;font-size:8.2px;color:#e4e4e4;transform:scaleX(0.9551)">Slide</span>
<span class="t" style="left:355.4px;top:168.65px;font-size:8.2px;color:#e4e4e4;transform:scaleX(0.8702)">Reuse</span>
<span class="t" style="left:355.4px;top:179.65px;font-size:8.2px;color:#e4e4e4;transform:scaleX(0.9232)">Slides</span>
<span class="t" style="left:397.3px;top:146.65px;font-size:8.2px;color:#e4e4e4;transform:scaleX(0.9311)">Layout</span>
<span class="t" style="left:397.3px;top:163.65px;font-size:8.2px;color:#e4e4e4;transform:scaleX(0.8742)">Reset</span>
<span class="t" style="left:397.3px;top:181.65px;font-size:8.2px;color:#e4e4e4;transform:scaleX(0.9519)">Section</span>
<span class="t" style="left:370.5px;top:195.95px;font-size:7.6px;color:#d0d0d0;transform:scaleX(0.8556)">Slides</span>
<span class="t" style="left:563.0px;top:151.75px;font-size:8px;color:#5a5a5a;transform:scaleX(0.9544)">60</span>
<span class="t" style="left:533.7px;top:195.95px;font-size:7.6px;color:#d0d0d0;transform:scaleX(0.8682)">Font</span>
<span class="t" style="left:705.5px;top:195.95px;font-size:7.6px;color:#d0d0d0;transform:scaleX(0.9219)">Paragraph</span>
<span class="t" style="left:904.0px;top:168.65px;font-size:8.2px;color:#e4e4e4;transform:scaleX(0.9746)">Arrange</span>
<span class="t" style="left:941.2px;top:168.65px;font-size:8.2px;color:#5c5c5c;transform:scaleX(0.8979)">Quick</span>
<span class="t" style="left:936.8px;top:179.65px;font-size:8.2px;color:#5c5c5c;transform:scaleX(0.8432)">Styles</span>
<span class="t" style="left:982.8px;top:146.65px;font-size:8.2px;color:#5c5c5c;transform:scaleX(0.9472)">Shape Fill</span>
<span class="t" style="left:982.8px;top:164.65px;font-size:8.2px;color:#5c5c5c;transform:scaleX(0.9594)">Shape Outline</span>
<span class="t" style="left:982.8px;top:181.65px;font-size:8.2px;color:#5c5c5c;transform:scaleX(0.9385)">Shape Effects</span>
<span class="t" style="left:908.7px;top:195.95px;font-size:7.6px;color:#d0d0d0;transform:scaleX(0.9117)">Drawing</span>
<span class="t" style="left:1070.9px;top:146.65px;font-size:8.2px;color:#e4e4e4;transform:scaleX(0.9412)">Find</span>
<span class="t" style="left:1070.9px;top:164.65px;font-size:8.2px;color:#e4e4e4;transform:scaleX(0.9552)">Replace</span>
<span class="t" style="left:1070.9px;top:180.65px;font-size:8.2px;color:#e4e4e4;transform:scaleX(0.9883)">Select</span>
<span class="t" style="left:1074.1px;top:196.95px;font-size:7.6px;color:#d0d0d0;transform:scaleX(0.9383)">Editing</span>
<span class="t" style="left:1128.1px;top:169.65px;font-size:8.2px;color:#e4e4e4;transform:scaleX(1.0085)">Dictate</span>
<span class="t" style="left:1132.3px;top:196.95px;font-size:7.6px;color:#d0d0d0;transform:scaleX(0.8881)">Voice</span>
<span class="t" style="left:1167.5px;top:169.65px;font-size:8.2px;color:#e4e4e4;transform:scaleX(1.0012)">Add-ins</span>
<span class="t" style="left:1169.0px;top:196.95px;font-size:7.6px;color:#d0d0d0;transform:scaleX(0.9243)">Add-ins</span>
<span class="t" style="left:1208.8px;top:169.65px;font-size:8.2px;color:#e4e4e4;transform:scaleX(0.9426)">Designer</span>
<span class="t" style="left:252.3px;top:218.75px;font-size:9px;color:#dcdcdc;transform:scaleX(0.5981)">1</span>
<span class="t" style="left:252.0px;top:298.75px;font-size:9px;color:#dcdcdc;transform:scaleX(0.8374)">2</span>
<span class="t" style="left:309.6px;top:245.60px;font-size:6.3px;color:#333;transform:scaleX(1.0167)">Key Words</span>
<span class="t" style="left:550.3px;top:254.15px;font-size:28.2px;color:#0c0c0c;transform:scaleX(0.9936)">Click to add title</span>
<span class="t sf" style="left:561.8px;top:312.05px;font-size:14.4px;color:#161616;transform:scaleX(1.0422)">Son of Man, Man, Baptism, Water Pitcher, Fountain, Stream, River, Pond, Lake, Ocean,</span>
<span class="t sf" style="left:561.8px;top:324.05px;font-size:14.4px;color:#161616;transform:scaleX(1.0009)">Sea</span>
<span class="t sf" style="left:561.8px;top:343.05px;font-size:14.4px;color:#161616;transform:scaleX(1.0566)">Ram, Lamb, Shephard, Rams Horn</span>
<span class="t sf" style="left:561.8px;top:361.05px;font-size:14.4px;color:#161616;transform:scaleX(1.0178)">Bull, Ox, Calf, Cow</span>
<span class="t sf" style="left:561.8px;top:380.05px;font-size:14.4px;color:#161616;transform:scaleX(1.0646)">Twins, brothers</span>
<span class="t sf" style="left:561.8px;top:398.05px;font-size:14.4px;color:#161616;transform:scaleX(1.0287)">Crab, Beetle</span>
<span class="t sf" style="left:561.8px;top:417.05px;font-size:14.4px;color:#161616;transform:scaleX(1.0378)">Lion, Lioness, Cub</span>
<span class="t sf" style="left:561.8px;top:435.05px;font-size:14.4px;color:#161616;transform:scaleX(1.0403)">Virgin, Wheat, Grain, Seed, Barley, Corn</span>
<span class="t sf" style="left:561.8px;top:453.05px;font-size:14.4px;color:#161616;transform:scaleX(1.0550)">Law, judge, justice, the just one, divorce, marriage, court. Wine, Vineyard, Winepress,</span>
<span class="t sf" style="left:561.8px;top:465.05px;font-size:14.4px;color:#161616;transform:scaleX(1.0358)">Olive Oil</span>
<span class="t sf" style="left:561.8px;top:484.05px;font-size:14.4px;color:#161616;transform:scaleX(1.0686)">Horse, bow and arrow, spear, horseman.</span>
<span class="t sf" style="left:561.8px;top:503.05px;font-size:14.4px;color:#161616;transform:scaleX(1.0322)">Goat, Kid,</span>
<span class="t sf" style="left:561.8px;top:521.05px;font-size:14.4px;color:#161616;transform:scaleX(1.0606)">Crown, Cup, Alter, Chariot, Ship</span>
<span class="t" style="left:406.5px;top:603.60px;font-size:10.3px;color:#d8d8d8;transform:scaleX(0.9626)">Click to add notes</span>
<span class="t" style="left:251.1px;top:624.85px;font-size:7.8px;color:#d8d8d8;transform:scaleX(0.9022)">Slide 2 of 2</span>
<span class="t" style="left:332.8px;top:624.95px;font-size:7.6px;color:#f0f0f0;transform:scaleX(0.8970);font-weight:bold">Accessibility: Investigate</span>
<span class="t" style="left:1003.5px;top:624.95px;font-size:7.6px;color:#d8d8d8;transform:scaleX(0.9625)">Notes</span>
<span class="t" style="left:1239.2px;top:625.15px;font-size:7.2px;color:#d0d0d0;transform:scaleX(0.8756)">78%</span>
<span class="t" style="left:18.5px;top:426.80px;font-size:10.9px;color:#ffffff;transform:scaleX(1.0590);font-weight:bold">Micah Dank</span>
<span class="t" style="left:453.0px;top:172.00px;font-size:9.5px;color:#a2a2a2;transform:scaleX(0.7273);font-weight:bold">B</span>
<span class="t it" style="left:471.6px;top:172.00px;font-size:9.5px;color:#a2a2a2;transform:scaleX(1.1361)">I</span>
<span class="t" style="left:486.8px;top:171.75px;font-size:9px;color:#a2a2a2;transform:scaleX(0.8615)">U</span>
<span class="t" style="left:503.8px;top:172.00px;font-size:9.5px;color:#a2a2a2;transform:scaleX(0.8828);font-weight:bold">S</span>
<span class="t" style="left:519.4px;top:173.00px;font-size:7.5px;color:#9a9a9a;transform:scaleX(1.0307)">ab</span>
<span class="t" style="left:536.4px;top:171.65px;font-size:8.2px;color:#a2a2a2;transform:scaleX(1.0457)">AV</span>
<span class="t" style="left:564.1px;top:172.00px;font-size:9.5px;color:#a2a2a2;transform:scaleX(0.9720)">Aa</span>
<span class="t" style="left:622.6px;top:170.75px;font-size:10px;color:#a2a2a2;transform:scaleX(1.1691)">A</span>
<span class="t" style="left:595.8px;top:150.65px;font-size:10.2px;color:#a2a2a2;transform:scaleX(1.0887)">A</span>
<span class="t" style="left:613.6px;top:151.85px;font-size:8.8px;color:#a2a2a2;transform:scaleX(1.0553)">A</span>
<span class="t" style="left:631.4px;top:150.75px;font-size:10px;color:#a2a2a2;transform:scaleX(1.0192)">A</span>
<svg class="mini" width="116.6" height="66" viewBox="0 0 666.8 375.3" preserveAspectRatio="none" font-family="Liberation Serif, serif" font-size="14.4" font-weight="bold" fill="#000" stroke="#000" stroke-width="0.9" text-rendering="geometricPrecision"><text x="63.5" y="110.7" textLength="527.6" lengthAdjust="spacingAndGlyphs">Son of Man, Man, Baptism, Water Pitcher, Fountain, Stream, River, Pond, Lake, Ocean,</text><circle cx="53.4" cy="106.5" r="2.2" stroke="none"/><text x="63.5" y="122.4" textLength="20.4" lengthAdjust="spacingAndGlyphs">Sea</text><text x="63.5" y="141.6" textLength="213.7" lengthAdjust="spacingAndGlyphs">Ram, Lamb, Shephard, Rams Horn</text><circle cx="53.4" cy="137.4" r="2.2" stroke="none"/><text x="63.5" y="160.0" textLength="117.6" lengthAdjust="spacingAndGlyphs">Bull, Ox, Calf, Cow</text><circle cx="53.4" cy="155.8" r="2.2" stroke="none"/><text x="63.5" y="178.6" textLength="94.7" lengthAdjust="spacingAndGlyphs">Twins, brothers</text><circle cx="53.4" cy="174.4" r="2.2" stroke="none"/><text x="63.5" y="197.0" textLength="73.6" lengthAdjust="spacingAndGlyphs">Crab, Beetle</text><circle cx="53.4" cy="192.8" r="2.2" stroke="none"/><text x="63.5" y="215.5" textLength="114.1" lengthAdjust="spacingAndGlyphs">Lion, Lioness, Cub</text><circle cx="53.4" cy="211.3" r="2.2" stroke="none"/><text x="63.5" y="234.1" textLength="245.8" lengthAdjust="spacingAndGlyphs">Virgin, Wheat, Grain, Seed, Barley, Corn</text><circle cx="53.4" cy="229.9" r="2.2" stroke="none"/><text x="63.5" y="252.3" textLength="522.2" lengthAdjust="spacingAndGlyphs">Law, judge, justice, the just one, divorce, marriage, court. Wine, Vineyard, Winepress,</text><circle cx="53.4" cy="248.1" r="2.2" stroke="none"/><text x="63.5" y="263.9" textLength="55.5" lengthAdjust="spacingAndGlyphs">Olive Oil</text><text x="63.5" y="282.9" textLength="246.1" lengthAdjust="spacingAndGlyphs">Horse, bow and arrow, spear, horseman.</text><circle cx="53.4" cy="278.7" r="2.2" stroke="none"/><text x="63.5" y="301.7" textLength="61.9" lengthAdjust="spacingAndGlyphs">Goat, Kid,</text><circle cx="53.4" cy="297.5" r="2.2" stroke="none"/><text x="63.5" y="320.2" textLength="200.8" lengthAdjust="spacingAndGlyphs">Crown, Cup, Alter, Chariot, Ship</text><circle cx="53.4" cy="316.0" r="2.2" stroke="none"/></svg>
<svg style="position:absolute;left:317px;top:308px" width="10" height="14" viewBox="0 0 10 14"><path d="M1.6,1 v9.4 l2.2,-2 l1.7,3.6 l1.5,-0.7 l-1.7,-3.5 h3z" fill="#fff" stroke="#222" stroke-width="0.9" stroke-linejoin="round"/></svg>
</body></html>
